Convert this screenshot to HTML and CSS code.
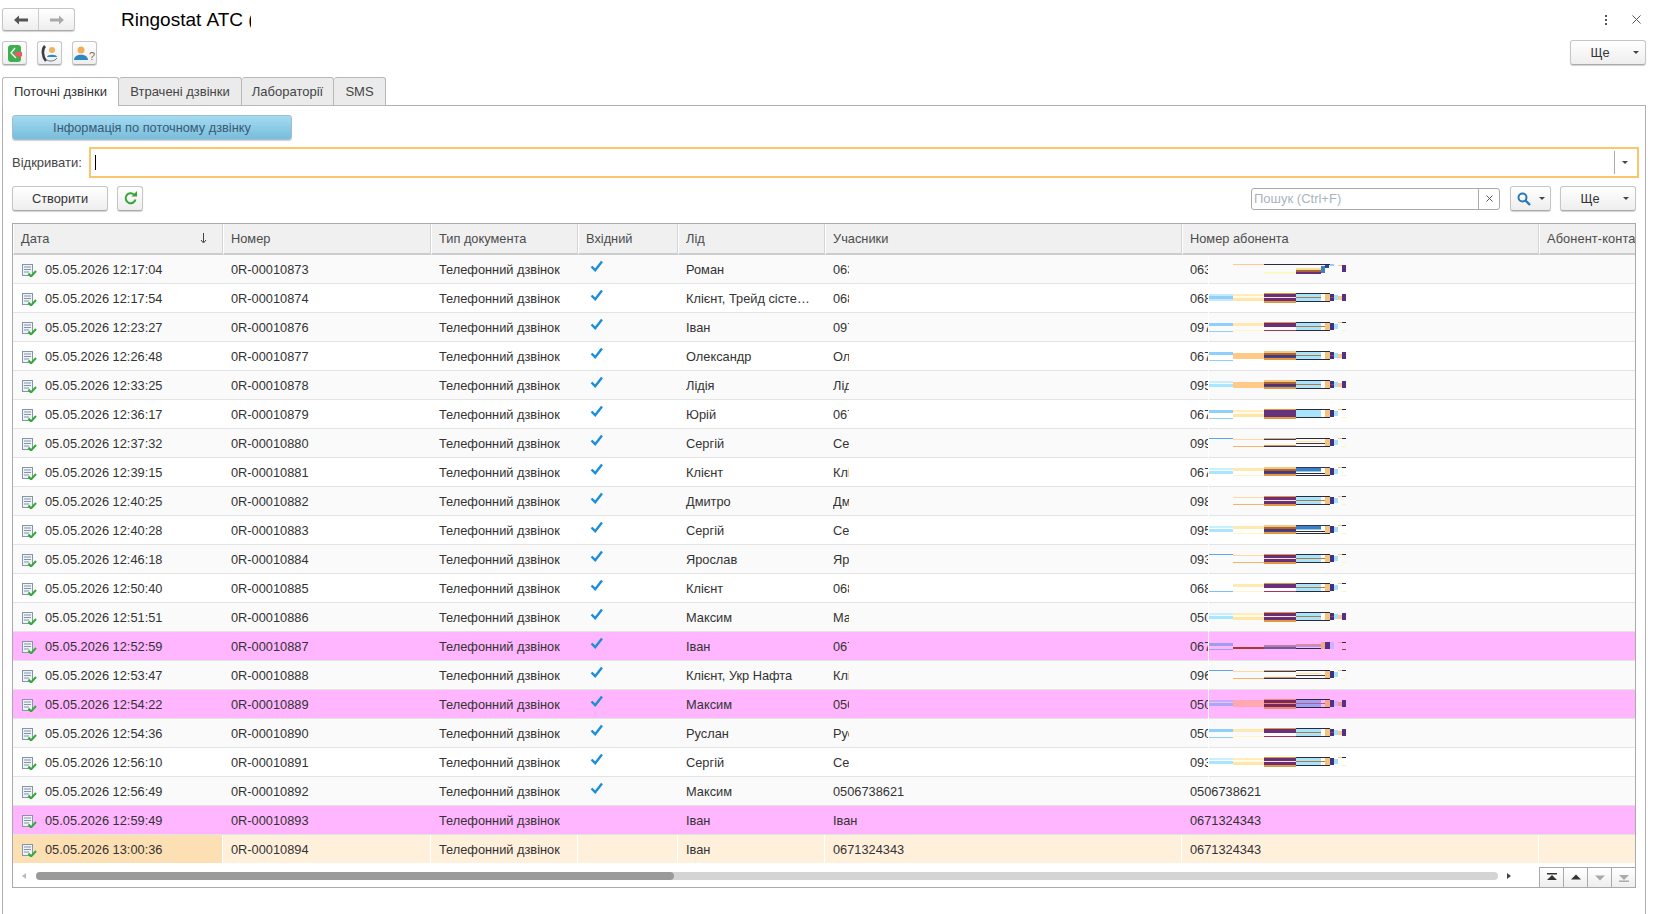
FILE: index.html
```html
<!DOCTYPE html>
<html>
<head>
<meta charset="utf-8" />
<title>Ringostat АТС</title>
<link rel="stylesheet" href="styles.css">
</head>
<body>
<!-- shared pieces of the broken strips in "Номер абонента" -->
<svg class="defs">
	<g id="aw"><rect y="10" width="24" height="2" fill="#c4e8fd"/><rect y="12" width="24" height="3" fill="#8fcffb"/><rect y="15" width="24" height="2" fill="#c4e8fd"/></g>
	<g id="as"><rect y="10" width="24" height="3" fill="#8fcffb"/><rect y="18" width="24" height="1" fill="#8fcffb"/></g>
	<g id="at"><rect y="9" width="24" height="1" fill="#5aa9e6"/></g>
	<g id="ab"><rect y="17" width="24" height="1" fill="#7cc0f8"/></g>
	<g id="ap"><rect y="10" width="24" height="2" fill="#c8f0ff"/><rect y="13" width="24" height="3" fill="#a8e6ff"/></g>
	<g id="bw"><rect x="24" y="10" width="31" height="2" fill="#ffeebb"/><rect x="24" y="12" width="31" height="2" fill="#fffbe8"/><rect x="24" y="14" width="31" height="3" fill="#ffe6a8"/></g>
	<g id="bs"><rect x="24" y="10" width="31" height="3" fill="#ffe9ae"/><rect x="24" y="17" width="31" height="1" fill="#fff5c8"/></g>
	<g id="bo"><rect x="24" y="11" width="31" height="6" fill="#ffc987"/></g>
	<g id="bl"><rect x="24" y="10" width="31" height="1" fill="#ffd9a0"/><rect x="24" y="17" width="31" height="1" fill="#f4b46c"/></g>
	<g id="cf"><rect x="55" y="9" width="32" height="10" fill="#e3973f"/><rect x="55" y="10" width="32" height="3" fill="#6a2f7a"/><rect x="55" y="13" width="32" height="1" fill="#f5e6c8"/><rect x="55" y="14" width="32" height="3" fill="#6a2f7a"/></g>
	<g id="cs"><rect x="55" y="9" width="32" height="10" fill="#e3973f"/><rect x="55" y="10" width="32" height="7" fill="#66327c"/></g>
	<g id="cr"><rect x="55" y="9" width="32" height="1" fill="#e3973f"/><rect x="55" y="10" width="32" height="4" fill="#6a2f7a"/><rect x="55" y="17" width="32" height="1" fill="#a83258"/></g>
	<g id="cg"><rect x="55" y="9" width="32" height="2" fill="#f5c585"/><rect x="55" y="11" width="32" height="2" fill="#a5682f"/><rect x="55" y="13" width="32" height="2" fill="#5a2f70"/><rect x="55" y="15" width="32" height="1" fill="#30509a"/><rect x="55" y="16" width="32" height="2" fill="#e3973f"/></g>
	<g id="cn"><rect x="55" y="9" width="32" height="1" fill="#f0a848"/><rect x="55" y="10" width="32" height="1" fill="#25408f"/><rect x="55" y="16" width="32" height="1" fill="#e3973f"/><rect x="55" y="17" width="32" height="1" fill="#3a2a60"/></g>
	<g id="df"><rect x="87" y="9" width="34" height="1" fill="#2a2a3a"/><rect x="87" y="10" width="25" height="3" fill="#a8e4fb"/><rect x="87" y="13" width="29" height="1" fill="#b07a48"/><rect x="87" y="14" width="25" height="3" fill="#a8e4fb"/><rect x="87" y="17" width="34" height="1" fill="#2a2a3a"/></g>
	<g id="ds"><rect x="87" y="9" width="34" height="1" fill="#2a2a3a"/><rect x="87" y="10" width="25" height="7" fill="#a8e4fb"/><rect x="87" y="17" width="34" height="1" fill="#2a2a3a"/></g>
	<g id="dg"><rect x="87" y="9" width="34" height="1" fill="#2a3a60"/><rect x="87" y="10" width="25" height="3" fill="#3f7fc0"/><rect x="87" y="13" width="25" height="1" fill="#8fc8ea"/><rect x="87" y="15" width="34" height="1" fill="#2a2a3a"/><rect x="87" y="17" width="34" height="1" fill="#2a2a3a"/></g>
	<g id="dt"><rect x="87" y="9" width="34" height="1" fill="#2a2a3a"/><rect x="87" y="12" width="25" height="1" fill="#ffe3a0"/><rect x="87" y="14" width="34" height="1" fill="#4a3040"/><rect x="87" y="17" width="34" height="1" fill="#2a2a3a"/></g>
	<g id="ef"><rect x="112" y="12" width="5" height="3" fill="#fff"/><rect x="116" y="10" width="5" height="7" fill="#f6c37e"/><rect x="121" y="10" width="4" height="7" fill="#3a3488"/><rect x="121" y="13" width="4" height="1" fill="#a83258"/><rect x="125" y="11" width="4" height="5" fill="#a8e0fb"/><rect x="129" y="12" width="4" height="4" fill="#ffc98a"/><rect x="133" y="10" width="4" height="7" fill="#55308a"/></g>
	<g id="es"><rect x="116" y="10" width="5" height="7" fill="#f6c37e"/><rect x="121" y="10" width="4" height="7" fill="#3a3488"/><rect x="125" y="11" width="4" height="5" fill="#a8e0fb"/><rect x="129" y="9" width="4" height="1" fill="#ffc98a"/><rect x="133" y="9" width="4" height="1" fill="#2a2a3a"/><rect x="133" y="17" width="4" height="1" fill="#fff5b0"/></g>
	<g id="doc"><rect x="1.5" y="1.5" width="10" height="11" fill="#eef2f5" stroke="#8296a8"/><path d="M3 4h7M3 6.5h7M3 9h5" stroke="#8296a8" fill="none"/><path d="M7.5 10.5l2.5 3 5-5.500" stroke="#35a83a" stroke-width="2" fill="none"/></g>
	<path id="tick" d="M1.500 6.500l3.700 3.700 6.800-8.700" stroke="#1a8ed8" stroke-width="2.400" fill="none"/>
</svg>

<div class="top">
	<div class="btn nav">
		<span class="nav-cell">
			<svg width="16" height="12" viewBox="0 0 16 12"><path d="M1 6l5-4.500V4.500h9v3H6v3z" fill="#555"/></svg>
		</span>
		<span class="nav-cell">
			<svg width="16" height="12" viewBox="0 0 16 12"><path d="M15 6l-5-4.500V4.500H1v3h9v3z" fill="#aaa"/></svg>
		</span>
	</div>
	<div class="title">Ringostat АТС (</div>
	<div class="window-tools">
		<svg width="4" height="12" viewBox="0 0 4 12"><path d="M1 1h2v2H1zM1 5h2v2H1zM1 9h2v2H1z" fill="#555"/></svg>
		<svg class="close" width="9" height="9" viewBox="0 0 9 9"><path d="M.5 .5l8 8M8.500 .5l-8 8" stroke="#555"/></svg>
	</div>
</div>

<div class="commands">
	<div class="btn icon-btn">
		<svg width="17" height="17" viewBox="0 0 17 17"><rect x="2" y="0" width="13" height="17" rx="3" fill="#3fae4e"/><path d="M9 3L5 8l5 5" stroke="#fff" stroke-width="1.300" fill="none"/><path d="M9 7h7v4l-3 2-1-2H9z" fill="#ee5a62"/></svg>
	</div>
	<div class="btn icon-btn">
		<svg width="20" height="19" viewBox="0 0 20 19"><path d="M5 2C2 5 2 12 6 17" stroke="#3c3c44" stroke-width="2.600" fill="none"/><circle cx="12" cy="6" r="3" fill="#eeb25e"/><path d="M7 13c0-3 10-3 10 0z" fill="#2d87c6"/><path d="M7 16c3 2 8 1 10-2" stroke="#5a7a98" fill="none"/></svg>
	</div>
	<div class="btn icon-btn help">
		<svg width="15" height="17" viewBox="0 0 15 17"><circle cx="7" cy="5" r="3.500" fill="#eeaf58"/><path d="M0 15c0-7 14-7 14 0z" fill="#2d87c6"/></svg>
		<span>?</span>
	</div>
	<div class="btn more more-top">Ще<i class="caret"></i></div>
</div>

<div class="tabs">
	<div class="tab active">Поточні дзвінки</div>
	<div class="tab">Втрачені дзвінки</div>
	<div class="tab">Лабораторії</div>
	<div class="tab">SMS</div>
</div>

<div class="panel">
	<div class="btn info">Інформація по поточному дзвінку</div>

	<div class="open-row">
		<label>Відкривати:</label>
		<div class="open-input">
			<i class="text-caret"></i>
			<span class="open-drop"><i class="caret"></i></span>
		</div>
	</div>

	<div class="toolbar">
		<div class="btn create">Створити</div>
		<div class="btn refresh">
			<svg width="15" height="15" viewBox="0 0 15 15"><path d="M12.500 8.500a5 5 0 1 1-1.500-5" stroke="#36a639" stroke-width="2" fill="none"/><path d="M8.500 5.500h5.500V0z" fill="#36a639"/></svg>
		</div>
		<div class="search">
			<span class="search-text">Пошук (Ctrl+F)</span>
			<span class="search-clear">
				<svg width="7" height="7" viewBox="0 0 7 7"><path d="M.5 .5l6 6M6.500 .5l-6 6" stroke="#555"/></svg>
			</span>
		</div>
		<div class="btn find">
			<svg width="14" height="14" viewBox="0 0 14 14"><circle cx="5.500" cy="5.500" r="4" stroke="#2a78b4" stroke-width="2" fill="none"/><path d="M8.500 8.500l4.500 4.500" stroke="#2a78b4" stroke-width="2.400"/></svg>
			<i class="caret"></i>
		</div>
		<div class="btn more">Ще<i class="caret"></i></div>
	</div>

	<div class="list">
		<i class="seam"></i>
		<table>
			<colgroup>
				<col class="c-date"><col class="c-num"><col class="c-type"><col class="c-in">
				<col class="c-lead"><col class="c-part"><col class="c-sub"><col class="c-cont">
			</colgroup>
			<thead>
				<tr>
					<th>Дата<svg class="sort" width="7" height="11" viewBox="0 0 7 11"><path d="M3.500 0v9M1 7l2.500 3L6 7" stroke="#444" fill="none"/></svg></th>
					<th>Номер</th><th>Тип документа</th><th>Вхідний</th><th>Лід</th><th>Учасники</th><th>Номер абонента</th><th>Абонент-контакт</th>
				</tr>
			</thead>
			<tbody>
				<tr>
					<td><svg class="doc"><use href="#doc"/></svg>05.05.2026 12:17:04</td><td>0R-00010873</td><td>Телефонний дзвінок</td><td><svg class="tick"><use href="#tick"/></svg></td><td>Роман</td>
					<td><span class="cut">063</span></td>
					<td><div class="sub"><span class="cut-sub">063</span><svg class="strip"><rect x="24" y="9" width="31" height="1" fill="#ffc98f"/><rect x="55" y="9" width="66" height="1" fill="#2a2a3a"/><rect x="55" y="17" width="32" height="2" fill="#fdf8c8"/><rect x="87" y="13" width="25" height="2" fill="#f5dca0"/><rect x="87" y="15" width="25" height="2" fill="#a5682f"/><rect x="87" y="17" width="25" height="2" fill="#6a2f7a"/><rect x="112" y="11" width="4" height="7" fill="#3f7fc0"/><rect x="116" y="10" width="4" height="3" fill="#2a4a90"/><rect x="121" y="9" width="4" height="2" fill="#8fcffb"/><rect x="129" y="10" width="4" height="1" fill="#ffc98a"/><rect x="133" y="10" width="4" height="7" fill="#55308a"/></svg></div></td><td></td>
				</tr>
				<tr>
					<td><svg class="doc"><use href="#doc"/></svg>05.05.2026 12:17:54</td><td>0R-00010874</td><td>Телефонний дзвінок</td><td><svg class="tick"><use href="#tick"/></svg></td><td>Клієнт, Трейд сісте…</td>
					<td><span class="cut">068</span></td>
					<td><div class="sub"><span class="cut-sub">068</span><svg class="strip"><use href="#aw"/><use href="#bw"/><use href="#cf"/><use href="#df"/><use href="#ef"/></svg></div></td><td></td>
				</tr>
				<tr>
					<td><svg class="doc"><use href="#doc"/></svg>05.05.2026 12:23:27</td><td>0R-00010876</td><td>Телефонний дзвінок</td><td><svg class="tick"><use href="#tick"/></svg></td><td>Іван</td>
					<td><span class="cut">097</span></td>
					<td><div class="sub"><span class="cut-sub">097</span><svg class="strip"><use href="#as"/><use href="#bs"/><use href="#cr"/><use href="#df"/><use href="#es"/></svg></div></td><td></td>
				</tr>
				<tr>
					<td><svg class="doc"><use href="#doc"/></svg>05.05.2026 12:26:48</td><td>0R-00010877</td><td>Телефонний дзвінок</td><td><svg class="tick"><use href="#tick"/></svg></td><td>Олександр</td>
					<td><span class="cut">Олександр</span></td>
					<td><div class="sub"><span class="cut-sub">067</span><svg class="strip"><use href="#as"/><use href="#bo"/><use href="#cg"/><use href="#df"/><use href="#ef"/></svg></div></td><td></td>
				</tr>
				<tr>
					<td><svg class="doc"><use href="#doc"/></svg>05.05.2026 12:33:25</td><td>0R-00010878</td><td>Телефонний дзвінок</td><td><svg class="tick"><use href="#tick"/></svg></td><td>Лідія</td>
					<td><span class="cut">Лідія</span></td>
					<td><div class="sub"><span class="cut-sub">095</span><svg class="strip"><use href="#ap"/><use href="#bo"/><use href="#cg"/><use href="#df"/><use href="#ef"/></svg></div></td><td></td>
				</tr>
				<tr>
					<td><svg class="doc"><use href="#doc"/></svg>05.05.2026 12:36:17</td><td>0R-00010879</td><td>Телефонний дзвінок</td><td><svg class="tick"><use href="#tick"/></svg></td><td>Юрій</td>
					<td><span class="cut">067</span></td>
					<td><div class="sub"><span class="cut-sub">067</span><svg class="strip"><use href="#as"/><use href="#bw"/><use href="#cs"/><use href="#ds"/><use href="#es"/></svg></div></td><td></td>
				</tr>
				<tr>
					<td><svg class="doc"><use href="#doc"/></svg>05.05.2026 12:37:32</td><td>0R-00010880</td><td>Телефонний дзвінок</td><td><svg class="tick"><use href="#tick"/></svg></td><td>Сергій</td>
					<td><span class="cut">Сергій</span></td>
					<td><div class="sub"><span class="cut-sub">099</span><svg class="strip"><use href="#at"/><use href="#bl"/><use href="#cn"/><use href="#dt"/><use href="#es"/></svg></div></td><td></td>
				</tr>
				<tr>
					<td><svg class="doc"><use href="#doc"/></svg>05.05.2026 12:39:15</td><td>0R-00010881</td><td>Телефонний дзвінок</td><td><svg class="tick"><use href="#tick"/></svg></td><td>Клієнт</td>
					<td><span class="cut">Клієнт</span></td>
					<td><div class="sub"><span class="cut-sub">067</span><svg class="strip"><use href="#ap"/><use href="#bs"/><use href="#cg"/><use href="#dg"/><use href="#es"/></svg></div></td><td></td>
				</tr>
				<tr>
					<td><svg class="doc"><use href="#doc"/></svg>05.05.2026 12:40:25</td><td>0R-00010882</td><td>Телефонний дзвінок</td><td><svg class="tick"><use href="#tick"/></svg></td><td>Дмитро</td>
					<td><span class="cut">Дмитро</span></td>
					<td><div class="sub"><span class="cut-sub">098</span><svg class="strip"><use href="#bl"/><use href="#cf"/><use href="#df"/><use href="#es"/></svg></div></td><td></td>
				</tr>
				<tr>
					<td><svg class="doc"><use href="#doc"/></svg>05.05.2026 12:40:28</td><td>0R-00010883</td><td>Телефонний дзвінок</td><td><svg class="tick"><use href="#tick"/></svg></td><td>Сергій</td>
					<td><span class="cut">Сергій</span></td>
					<td><div class="sub"><span class="cut-sub">095</span><svg class="strip"><use href="#ap"/><use href="#bs"/><use href="#cg"/><use href="#dg"/><use href="#es"/></svg></div></td><td></td>
				</tr>
				<tr>
					<td><svg class="doc"><use href="#doc"/></svg>05.05.2026 12:46:18</td><td>0R-00010884</td><td>Телефонний дзвінок</td><td><svg class="tick"><use href="#tick"/></svg></td><td>Ярослав</td>
					<td><span class="cut">Ярослав</span></td>
					<td><div class="sub"><span class="cut-sub">093</span><svg class="strip"><use href="#at"/><use href="#bl"/><use href="#cf"/><use href="#df"/><use href="#es"/></svg></div></td><td></td>
				</tr>
				<tr>
					<td><svg class="doc"><use href="#doc"/></svg>05.05.2026 12:50:40</td><td>0R-00010885</td><td>Телефонний дзвінок</td><td><svg class="tick"><use href="#tick"/></svg></td><td>Клієнт</td>
					<td><span class="cut">068</span></td>
					<td><div class="sub"><span class="cut-sub">068</span><svg class="strip"><use href="#ab"/><use href="#bs"/><use href="#cr"/><use href="#df"/><use href="#es"/></svg></div></td><td></td>
				</tr>
				<tr>
					<td><svg class="doc"><use href="#doc"/></svg>05.05.2026 12:51:51</td><td>0R-00010886</td><td>Телефонний дзвінок</td><td><svg class="tick"><use href="#tick"/></svg></td><td>Максим</td>
					<td><span class="cut">Максим</span></td>
					<td><div class="sub"><span class="cut-sub">050</span><svg class="strip"><use href="#ap"/><use href="#bw"/><use href="#cf"/><use href="#df"/><use href="#ef"/></svg></div></td><td></td>
				</tr>
				<tr class="pink">
					<td><svg class="doc"><use href="#doc"/></svg>05.05.2026 12:52:59</td><td>0R-00010887</td><td>Телефонний дзвінок</td><td><svg class="tick"><use href="#tick"/></svg></td><td>Іван</td>
					<td><span class="cut">067</span></td>
					<td><div class="sub"><span class="cut-sub">067</span><svg class="strip"><rect y="11" width="24" height="3" fill="#9d9df2"/><rect y="17" width="24" height="1" fill="#9d9df2"/><rect x="24" y="15" width="31" height="2" fill="#a83a2a"/><rect x="55" y="13" width="32" height="2" fill="#c07aa0"/><rect x="55" y="15" width="32" height="2" fill="#6a58a8"/><rect x="87" y="12" width="25" height="2" fill="#d88aa8"/><rect x="87" y="14" width="25" height="1" fill="#9d9df2"/><rect x="87" y="16" width="34" height="1" fill="#2a2a3a"/><rect x="112" y="10" width="4" height="7" fill="#f5a888"/><rect x="116" y="10" width="5" height="7" fill="#55308a"/><rect x="121" y="10" width="4" height="7" fill="#c8b4ff"/><rect x="129" y="10" width="4" height="1" fill="#f5a888"/><rect x="133" y="10" width="4" height="1" fill="#2a2a3a"/><rect x="133" y="17" width="4" height="1" fill="#a83a2a"/></svg></div></td><td></td>
				</tr>
				<tr>
					<td><svg class="doc"><use href="#doc"/></svg>05.05.2026 12:53:47</td><td>0R-00010888</td><td>Телефонний дзвінок</td><td><svg class="tick"><use href="#tick"/></svg></td><td>Клієнт, Укр Нафта</td>
					<td><span class="cut">Клієнт</span></td>
					<td><div class="sub"><span class="cut-sub">096</span><svg class="strip"><use href="#at"/><use href="#bl"/><use href="#cn"/><use href="#dt"/><use href="#es"/></svg></div></td><td></td>
				</tr>
				<tr class="pink">
					<td><svg class="doc"><use href="#doc"/></svg>05.05.2026 12:54:22</td><td>0R-00010889</td><td>Телефонний дзвінок</td><td><svg class="tick"><use href="#tick"/></svg></td><td>Максим</td>
					<td><span class="cut">050</span></td>
					<td><div class="sub"><span class="cut-sub">050</span><svg class="strip"><rect y="10" width="24" height="2" fill="#c0b0f8"/><rect y="13" width="24" height="3" fill="#a8a8f5"/><rect x="24" y="10" width="31" height="7" fill="#ffa8b0"/><rect x="55" y="9" width="32" height="10" fill="#ef8a70"/><rect x="55" y="10" width="32" height="3" fill="#7a2a5a"/><rect x="55" y="14" width="32" height="3" fill="#7a2a5a"/><rect x="87" y="9" width="34" height="1" fill="#2a2a3a"/><rect x="87" y="10" width="25" height="7" fill="#a0a0f2"/><rect x="87" y="13" width="29" height="1" fill="#b0608a"/><rect x="87" y="17" width="34" height="1" fill="#2a2a3a"/><rect x="116" y="10" width="5" height="7" fill="#f5a888"/><rect x="121" y="10" width="4" height="7" fill="#55308a"/><rect x="125" y="11" width="4" height="5" fill="#c8b4ff"/><rect x="129" y="12" width="4" height="4" fill="#f59a88"/><rect x="133" y="10" width="4" height="7" fill="#55308a"/></svg></div></td><td></td>
				</tr>
				<tr>
					<td><svg class="doc"><use href="#doc"/></svg>05.05.2026 12:54:36</td><td>0R-00010890</td><td>Телефонний дзвінок</td><td><svg class="tick"><use href="#tick"/></svg></td><td>Руслан</td>
					<td><span class="cut">Руслан</span></td>
					<td><div class="sub"><span class="cut-sub">050</span><svg class="strip"><use href="#as"/><use href="#bs"/><use href="#cr"/><use href="#df"/><use href="#ef"/></svg></div></td><td></td>
				</tr>
				<tr>
					<td><svg class="doc"><use href="#doc"/></svg>05.05.2026 12:56:10</td><td>0R-00010891</td><td>Телефонний дзвінок</td><td><svg class="tick"><use href="#tick"/></svg></td><td>Сергій</td>
					<td><span class="cut">Сергій</span></td>
					<td><div class="sub"><span class="cut-sub">093</span><svg class="strip"><use href="#ap"/><use href="#bw"/><use href="#cf"/><use href="#df"/><use href="#es"/></svg></div></td><td></td>
				</tr>
				<tr>
					<td><svg class="doc"><use href="#doc"/></svg>05.05.2026 12:56:49</td><td>0R-00010892</td><td>Телефонний дзвінок</td><td><svg class="tick"><use href="#tick"/></svg></td><td>Максим</td>
					<td>0506738621</td><td>0506738621</td><td></td>
				</tr>
				<tr class="pink">
					<td><svg class="doc"><use href="#doc"/></svg>05.05.2026 12:59:49</td><td>0R-00010893</td><td>Телефонний дзвінок</td><td></td><td>Іван</td>
					<td>Іван</td><td>0671324343</td><td></td>
				</tr>
				<tr class="current">
					<td><svg class="doc"><use href="#doc"/></svg>05.05.2026 13:00:36</td><td>0R-00010894</td><td>Телефонний дзвінок</td><td></td><td>Іван</td>
					<td>0671324343</td><td>0671324343</td><td></td>
				</tr>
			</tbody>
		</table>

		<div class="scroll">
			<i class="arrow-left"></i>
			<div class="track"><div class="thumb"></div></div>
			<i class="arrow-right"></i>
			<div class="pager">
				<span><svg width="14" height="9" viewBox="0 0 14 9"><path d="M2 0h10v1.500H2zM7 2l5 5H2z" fill="#333"/></svg></span>
				<span><svg width="14" height="9" viewBox="0 0 14 9"><path d="M7 1.500l5 5H2z" fill="#333"/></svg></span>
				<span><svg width="14" height="9" viewBox="0 0 14 9"><path d="M7 7.500l5-5H2z" fill="#aaa"/></svg></span>
				<span><svg width="14" height="9" viewBox="0 0 14 9"><path d="M2 7.500h10V9H2zM7 7l5-5H2z" fill="#aaa"/></svg></span>
			</div>
		</div>
	</div>
</div>
</body>
</html>
```

FILE: styles.css
```css
* {
	box-sizing: border-box;
}

html, body {
	margin: 0;
	height: 914px;
	overflow: hidden;
	background: #fff;
}

body {
	font-family: "Liberation Sans", Arial, sans-serif;
	font-size: 12.8px;
	color: #333;
}

.defs {
	display: none;
}

.btn {
	display: flex;
	align-items: center;
	justify-content: center;
	background: linear-gradient(#fff, #eee);
	border: 1px solid #c6c6c6;
	border-bottom-color: #aaa;
	border-radius: 3px;
	box-shadow: 0 1px 1px rgba(0, 0, 0, .18);
}

.caret {
	display: block;
	width: 0;
	height: 0;
	border-left: 3.500px solid transparent;
	border-right: 3.500px solid transparent;
	border-top: 3.500px solid #444;
}

/* top line */
.top {
	display: flex;
	align-items: center;
	height: 31px;
	padding: 8px 12px 0 2px;
}

.nav {
	width: 73px;
	height: 23px;
}

.nav-cell {
	flex: 1;
	height: 100%;
	display: flex;
	align-items: center;
	justify-content: center;
}

.nav-cell + .nav-cell {
	border-left: 1px solid #ccc;
}

.title {
	width: 130px;
	margin-left: 46px;
	overflow: hidden;
	white-space: nowrap;
	font-size: 19px;
	color: #000;
}

.window-tools {
	margin-left: auto;
	display: flex;
	align-items: center;
	gap: 24px;
	padding-right: 5px;
}

.commands {
	display: flex;
	align-items: flex-end;
	gap: 10px;
	margin-top: 9px;
	padding: 0 12px 0 2px;
}

.icon-btn {
	width: 25px;
	height: 24px;
}

.help span {
	font-size: 11px;
	color: #8a6a3a;
	margin-top: 6px;
}

.more {
	position: relative;
	width: 76px;
	height: 25px;
	padding-right: 16px;
}

.more .caret {
	position: absolute;
	right: 6px;
	top: 10px;
}

.more-top {
	margin-left: auto;
}

/* tabs */
.tabs {
	display: flex;
	margin-top: 12px;
	padding-left: 2px;
	height: 28px;
}

.tab {
	position: relative;
	display: flex;
	align-items: center;
	justify-content: center;
	height: 29px;
	padding-bottom: 1px;
	font-size: 13px;
	color: #444;
	background: #ebebeb;
	border: 1px solid #b8b8b8;
	border-left: 0;
	border-radius: 3px 3px 0 0;
}

.tab:nth-child(1) { width: 117px; }
.tab:nth-child(2) { width: 123px; }
.tab:nth-child(3) { width: 92px; }
.tab:nth-child(4) { width: 52px; }

.tab.active {
	z-index: 1;
	background: #fff;
	color: #333;
	border-left: 1px solid #b8b8b8;
	border-bottom: 0;
}

/* page of the tab */
.panel {
	height: 809px;
	margin: 0 12px 0 2px;
	padding: 9px 9px 0;
	border: 1px solid #b0b0b0;
	border-bottom: 0;
}

.info {
	width: 280px;
	height: 25px;
	color: #3b5a74;
	background: linear-gradient(#a3dbf1, #78bddb);
	border-color: #9cc0d0;
}

.open-row {
	display: flex;
	align-items: center;
	margin: 7px -3px 0 0;
}

.open-row label {
	width: 77px;
	font-size: 13px;
	color: #444;
}

.open-input {
	flex: 1;
	display: flex;
	align-items: center;
	height: 31px;
	padding-left: 4px;
	border: 2px solid #f9c56e;
}

.text-caret {
	width: 1px;
	height: 15px;
	background: #000;
}

.open-drop {
	margin-left: auto;
	width: 23px;
	height: 23px;
	padding-right: 2px;
	display: flex;
	align-items: center;
	justify-content: center;
	border-left: 1px solid #aaa;
}

.toolbar {
	display: flex;
	align-items: center;
	margin-top: 8px;
}

.create {
	width: 96px;
	height: 25px;
}

.refresh {
	width: 26px;
	height: 25px;
	margin-left: 9px;
}

.search {
	display: flex;
	width: 249px;
	height: 22px;
	margin-left: auto;
	border: 1px solid #aaa;
	border-radius: 3px;
}

.search-text {
	flex: 1;
	padding-left: 2px;
	line-height: 20px;
	font-size: 13px;
	color: #a9b4bf;
}

.search-clear {
	width: 21px;
	display: flex;
	align-items: center;
	justify-content: center;
	border-left: 1px solid #aaa;
}

.find {
	width: 41px;
	height: 25px;
	margin-left: 10px;
	gap: 8px;
}

.toolbar .more {
	margin-left: 9px;
}

/* list */
.list {
	position: relative;
	height: 665px;
	margin-top: 12px;
	border: 1px solid #aaa;
	display: flex;
	flex-direction: column;
	overflow: hidden;
}

.seam {
	position: absolute;
	left: 1195px;
	top: 31px;
	width: 1px;
	height: 527px;
	background: #fff;
}

table {
	width: 1623px;
	table-layout: fixed;
	border-collapse: separate;
	border-spacing: 0;
}

.c-date { width: 210px; }
.c-num { width: 208px; }
.c-type { width: 147px; }
.c-in { width: 100px; }
.c-lead { width: 147px; }
.c-part { width: 357px; }
.c-sub { width: 357px; }
.c-cont { width: 97px; }

thead tr {
	height: 31px;
}

th {
	position: relative;
	padding: 0 0 0 7px;
	text-align: left;
	font-weight: normal;
	white-space: nowrap;
	overflow: hidden;
	color: #4c4c4c;
	background: #f0f0f0;
	border-left: 1px solid #fff;
	border-right: 1px solid #d4d4d4;
	border-bottom: 2px solid #ccc;
}

th:last-child {
	border-right: 0;
	letter-spacing: .1px;
}

.sort {
	position: absolute;
	right: 15px;
	top: 9px;
}

tbody tr {
	height: 29px;
}

td {
	padding: 0 8px;
	white-space: nowrap;
	overflow: hidden;
	background: #fff;
	border-bottom: 1px solid #e3e3e3;
}

tbody tr:nth-child(odd) td {
	background: #fafafa;
}

tbody tr.pink td {
	background: #ffb6ff;
}

tbody tr.current td {
	background: #fff0dc;
	border-right: 1px solid #fff;
	border-bottom-color: #fff;
}

tbody tr.current td:first-child {
	background: #fddfb4;
}

.doc {
	width: 16px;
	height: 14px;
	margin-right: 8px;
	vertical-align: -3px;
}

.tick {
	display: block;
	width: 13px;
	height: 12px;
	margin: -7px 0 0 4px;
}

.cut {
	display: block;
	width: 16px;
	overflow: hidden;
}

.sub {
	display: flex;
	align-items: center;
	height: 28px;
	margin-left: 0;
}

.cut-sub {
	width: 19px;
	flex: none;
	overflow: hidden;
}

.strip {
	flex: none;
	width: 137px;
	height: 28px;
}

/* scroll line under the list */
.scroll {
	display: flex;
	align-items: center;
	flex: 1;
	padding-left: 9px;
}

.arrow-left,
.arrow-right {
	width: 0;
	height: 0;
	border-top: 3.500px solid transparent;
	border-bottom: 3.500px solid transparent;
}

.arrow-left {
	border-right: 4px solid #bbb;
}

.arrow-right {
	border-left: 4px solid #444;
	margin-left: 9px;
}

.track {
	width: 1462px;
	height: 8px;
	margin-left: 10px;
	background: #d4d4d4;
	border-radius: 4px;
}

.thumb {
	width: 638px;
	height: 8px;
	background: #9a9a9a;
	border-radius: 4px;
}

.pager {
	display: flex;
	align-self: flex-end;
	margin-left: auto;
	height: 20px;
}

.pager span {
	width: 24px;
	display: flex;
	align-items: center;
	justify-content: center;
	background: linear-gradient(#fff, #eee);
	border-top: 1px solid #aaa;
	border-left: 1px solid #aaa;
}
```
